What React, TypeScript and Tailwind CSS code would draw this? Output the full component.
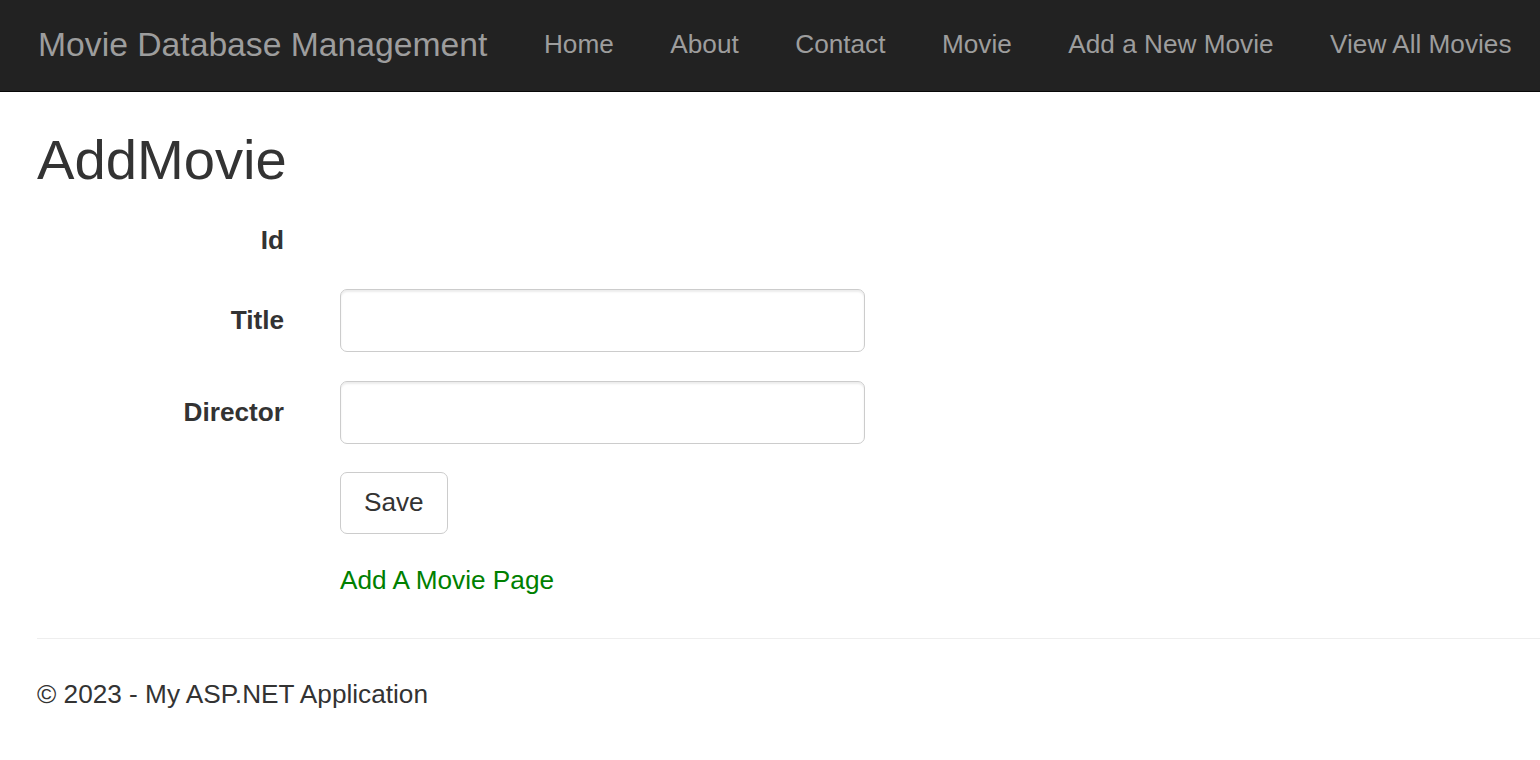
import React from "react";

export default function App() {
  const links = ["Home", "About", "Contact", "Movie", "Add a New Movie", "View All Movies"];
  return (
    <div className="min-h-[760px] bg-white text-[#333] font-['Liberation_Sans',Arial,sans-serif]">
      <nav className="h-[92px] bg-[#222] border-b border-[#080808] flex items-center pl-[38px] pb-[3px]">
        <a className="text-[33.7px] leading-[37px] text-[#9d9d9d] pr-[56.5px] whitespace-nowrap">
          Movie Database Management
        </a>
        <ul className="flex gap-[56.5px]">
          {links.map((l) => (
            <li key={l}>
              <a className="text-[26.2px] leading-[37px] text-[#9d9d9d] whitespace-nowrap">{l}</a>
            </li>
          ))}
        </ul>
      </nav>

      <div className="pl-[37px]">
        <h2 className="mt-[37px] mb-[18.5px] text-[56.2px] leading-[61px] font-normal text-[#333]">AddMovie</h2>

        <div className="flex flex-col">
          <div className="flex mb-[30px]">
            <label className="w-[247px] text-right font-bold text-[26.2px] leading-[37px] pt-[13px]">Id</label>
          </div>

          <div className="flex gap-[56px] mb-[29px]">
            <label className="w-[247px] text-right font-bold text-[26.2px] leading-[37px] pt-[13px]">Title</label>
            <input
              type="text"
              className="w-[525px] h-[63px] border border-[#ccc] rounded-[7px] bg-white shadow-[inset_0_2px_2px_rgba(0,0,0,0.075)] px-[22px] text-[26px] outline-none"
            />
          </div>

          <div className="flex gap-[56px] mb-[28px]">
            <label className="w-[247px] text-right font-bold text-[26.2px] leading-[37px] pt-[13px]">Director</label>
            <input
              type="text"
              className="w-[525px] h-[63px] border border-[#ccc] rounded-[7px] bg-white shadow-[inset_0_2px_2px_rgba(0,0,0,0.075)] px-[22px] text-[26px] outline-none"
            />
          </div>

          <div className="pl-[303px] mb-[28px]">
            <button className="h-[62px] px-[23px] border border-[#ccc] rounded-[7px] bg-white text-[26.2px] leading-[37px] text-[#333]">
              Save
            </button>
          </div>

          <div className="pl-[303px]">
            <a className="text-[26.2px] leading-[37px] text-[#008000]">Add A Movie Page</a>
          </div>
        </div>

        <hr className="mt-[39px] mb-[37px] border-0 border-t border-[#eee]" />

        <footer>
          <p className="text-[26.2px] leading-[37px] text-[#333]">© 2023 - My ASP.NET Application</p>
        </footer>
      </div>
    </div>
  );
}
